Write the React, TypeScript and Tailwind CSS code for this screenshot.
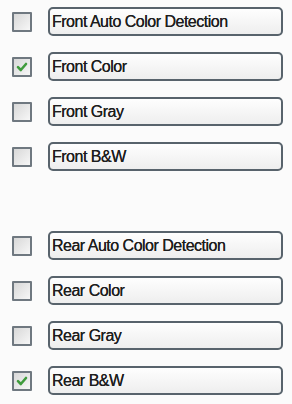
const front = [
  { label: "Front Auto Color Detection", checked: false },
  { label: "Front Color", checked: true },
  { label: "Front Gray", checked: false },
  { label: "Front B&W", checked: false },
];

const rear = [
  { label: "Rear Auto Color Detection", checked: false },
  { label: "Rear Color", checked: false },
  { label: "Rear Gray", checked: false },
  { label: "Rear B&W", checked: true },
];

function Check({ checked }: { checked: boolean }) {
  return (
    <span className="flex h-[20px] w-[20px] shrink-0 items-center justify-center rounded-[1px] border-2 border-[#6f7880] bg-gradient-to-br from-[#d8d8d8] to-[#f7f7f7]">
      {checked && (
        <svg viewBox="0 0 12 12" className="h-[12px] w-[12px]">
          <path d="M2 6.2 L4.8 9 L10 3" fill="none" stroke="#3f9b3c" strokeWidth="2.6" strokeLinecap="round" strokeLinejoin="round" />
        </svg>
      )}
    </span>
  );
}

function Row({ label, checked }: { label: string; checked: boolean }) {
  return (
    <div className="flex items-center">
      <div className="flex w-[48px] shrink-0 pl-[12px]">
        <Check checked={checked} />
      </div>
      <div className="flex h-[29px] w-[235px] items-center rounded-[5px] border-2 border-[#58636c] bg-gradient-to-b from-[#fefefe] to-[#eeeeee] pl-[2px] text-[16px] leading-none tracking-[-0.5px] text-[#1e1e1e] [text-shadow:0_0_0.3px_#1e1e1e]">
        {label}
      </div>
    </div>
  );
}

export default function App() {
  return (
    <div
      className="min-h-[404px] w-[292px] bg-[#fbfbfb] pt-[7px]"
      style={{ fontFamily: '"Liberation Sans", Arial, sans-serif' }}
    >
      <div className="flex flex-col gap-[16px]">
        {front.map((item) => (
          <Row key={item.label} label={item.label} checked={item.checked} />
        ))}
      </div>
      <div className="mt-[60px] flex flex-col gap-[16px]">
        {rear.map((item) => (
          <Row key={item.label} label={item.label} checked={item.checked} />
        ))}
      </div>
    </div>
  );
}
